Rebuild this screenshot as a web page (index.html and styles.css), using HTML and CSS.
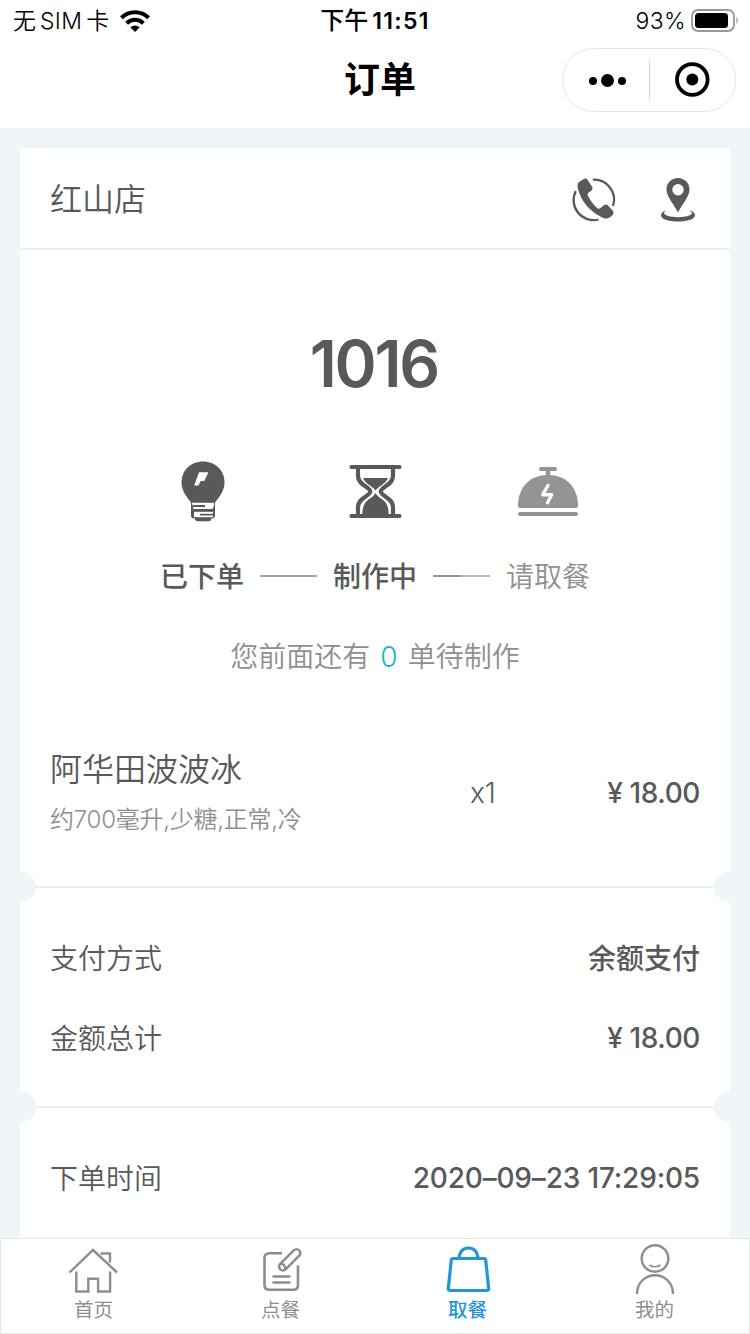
FILE: index.html
```html
<!DOCTYPE html>
<html lang="zh-CN">
<head>
<meta charset="utf-8">
<title>订单</title>
<link rel="stylesheet" href="styles.css">
</head>
<body>
<header class="top">
  <div class="status">
    <div class="carrier"><span>无</span><span class="sim">SIM</span><span>卡</span>
      <svg class="wifi" width="30" height="22" viewBox="0 0 30 22"><g fill="none" stroke="#000" stroke-width="4"><path d="M1.400 7.800a19.500 19.500 0 0 1 27.200 0"/><path d="M6.600 13.300a12 12 0 0 1 16.800 0"/></g><path d="M15 22l-4.700-4.700q4.700-3.800 9.400 0z"/></svg>
    </div>
    <div class="clock"><span>下午</span><span class="time">11:51</span></div>
    <div class="power"><span>93%</span>
      <svg width="48" height="24" viewBox="0 0 48 24"><rect x="1" y="1" width="42" height="21" rx="6" fill="none" stroke="#999" stroke-width="1.800"/><rect x="4" y="4" width="33" height="15" rx="3.500"/><path d="M45.500 8q2.500 3.500 0 7z" fill="#888"/></svg>
    </div>
  </div>
  <div class="nav">
    <h1 class="title">订单</h1>
    <div class="capsule">
      <svg class="half" width="86" height="62" viewBox="0 0 86 62"><circle cx="30" cy="32" r="4"/><circle cx="44.500" cy="31.500" r="6.500"/><circle cx="59" cy="32" r="4"/></svg>
      <i class="split"></i>
      <svg class="half" width="86" height="62" viewBox="0 0 86 62"><circle cx="43.300" cy="30.500" r="15.300" fill="none" stroke="#000" stroke-width="3.800"/><circle cx="43.300" cy="30.500" r="6"/></svg>
    </div>
  </div>
</header>

<main class="page">
  <section class="card">
    <div class="store">
      <span class="store-name cjk">红山店</span>
      <div class="store-actions">
        <svg width="44" height="46" viewBox="0 0 44 46"><g fill="none" stroke="#58595b" stroke-width="2.300"><path d="M20.800 3.700A20 20 0 0 1 41 30"/><path d="M3.800 15A20 20 0 0 0 26.500 43.500"/></g><path d="M6.300 6.600l5.400-3.500q2.500-1.300 4 .9l4.500 7q1.200 2.200-.8 3.700l-2.800 1.800q-1.700 1.200-.7 3.200 4.200 8 9.500 12.600 1.700 1.200 3.200-.2l3.700-3q2-1.400 3.700.3l5 5.700q1.300 1.800-.2 3.600-4.500 5.300-9.600 3.200Q11 32.500 5.800 12.500 5 8.500 6.300 6.600z" fill="#58595b"/></svg>
        <svg width="36" height="46" viewBox="0 0 36 46"><path fill="#58595b" fill-rule="evenodd" d="M18 2c-6.500 0-11.500 5-11.500 11.200C6.500 21 14 28 18 36.500 22 28 29.500 21 29.500 13.200 29.500 7 24.500 2 18 2zm0 6a5.700 5.700 0 1 1 0 11.400A5.700 5.700 0 0 1 18 8z"/><path fill="#58595b" d="M7 34C3 35 1 37 1 39.200 1 43 8 45.500 18 45.500s17-2.500 17-6.300C35 37 33 35 28.500 34c2.500 1.200 3.400 2.200 3.400 3 0 2.300-6 4.200-13.900 4.200S4.100 39.300 4.100 37c0-.8.700-1.900 2.900-3z"/></svg>
      </div>
    </div>

    <div class="number">1016</div>

    <div class="steps">
      <div class="step">
        <svg width="84" height="64" viewBox="0 0 84 64"><path fill="#58595b" d="M43 1.500c12.500 0 21.500 9 21.500 21 0 7.500-4 13-9.500 20H31c-5.500-7-9.500-12.500-9.500-20C21.500 10.500 30.500 1.500 43 1.500z"/><path fill="#fff" d="M39 12.300h9.500L44.300 21h-3.600l-2.200 4.500h-4.300z"/><path fill="#58595b" d="M31 42h24v14.500q-.5 2-3.500 2-.5 2.700-3 2.700h-11q-2 0-3-2.700-3 0-3.500-2z"/><path fill="#fff" d="M32 42.800h22q.5 4-1.500 6.200H33.500z"/><path fill="#fff" d="M34 51.800h19v5.400H34z"/><path d="M33 46h12M40 54.600h13" stroke="#58595b" stroke-width="1.800"/></svg>
        <b class="cjk">已下单</b>
      </div>
      <i class="link"></i>
      <div class="step">
        <svg width="84" height="64" viewBox="0 0 84 64"><g fill="none" stroke="#58595b" stroke-width="4.200"><path d="M18.500 7h48M18.500 56h48" stroke-linecap="round"/><path d="M25 8v8c0 9 11.500 10.500 12.300 15.500C36.500 36.500 25 38 25 47v8M60 8v8c0 9-11.500 10.500-12.300 15.500C48.500 36.500 60 38 60 47v8"/></g><path fill="#58595b" d="M30 18h25c-1.300 3-2.800 4.300-5.500 6.500-2.500 1.800-5 3.500-7 6-2-2.500-4.500-4.200-7-6-2.700-2.200-4.200-3.500-5.500-6.500zM42.500 33c2 3.500 4.500 5 7 6.500 4.500 3.500 6.200 7.500 6.200 16H29.300c0-8.500 1.700-12.500 6.200-16 2.500-1.500 5-3 7-6.500z"/></svg>
        <b class="cjk">制作中</b>
      </div>
      <i class="link fade"></i>
      <div class="step wait">
        <svg width="84" height="64" viewBox="0 0 84 64"><g stroke="#939495" stroke-linecap="round" fill="none"><path stroke-width="4" d="M35 9h14M14 54h56"/><path stroke-width="4.500" d="M42 10v8"/></g><path fill="#939495" d="M12 46C12 27 24 15 42 15s30 12 30 31q0 2-2 2H14q-2 0-2-2z"/><path d="M42 25.500l-5.300 9.200h9l-4.200 8" fill="none" stroke="#fff" stroke-width="3.400" stroke-linecap="round" stroke-linejoin="round"/></svg>
        <span class="cjk">请取餐</span>
      </div>
    </div>

    <p class="queue cjk">您前面还有<em>0</em>单待制作</p>

    <div class="item">
      <div class="item-text">
        <div class="item-name">阿华田波波冰</div>
        <div class="item-spec">约700毫升,少糖,正常,冷</div>
      </div>
      <span class="qty">x1</span>
      <span class="price"><span>¥</span>18.00</span>
    </div>

    <div class="tear"></div>
    <div class="rows">
      <div class="row"><span class="cjk">支付方式</span><b class="cjk">余额支付</b></div>
      <div class="row"><span class="cjk">金额总计</span><span class="price"><span>¥</span>18.00</span></div>
    </div>

    <div class="tear"></div>
    <div class="rows">
      <div class="row"><span class="cjk">下单时间</span><span class="stamp">2020–09–23 17:29:05</span></div>
    </div>
  </section>
</main>

<nav class="tabs">
  <div class="tab">
    <svg width="54" height="50" viewBox="0 0 54 50"><g fill="none" stroke="#8e8e8e" stroke-width="2.400"><path d="M2.500 26.500L26 4l24 22.500"/><path d="M33.500 7.500H43v9"/><path d="M9.300 25.500v20h12V32.700h9.800v12.800h12v-20"/></g></svg>
    <span>首页</span>
  </div>
  <div class="tab">
    <svg width="54" height="50" viewBox="0 0 54 50"><g fill="none" stroke="#8e8e8e" stroke-width="2.600"><path d="M28 7.300H15.500q-5 0-5 5v26.500q0 5 5 5h24q4.500 0 4.500-5V19.500"/><path d="M18.500 30.500h18M18.500 36.500h18" stroke-width="2.400"/><path d="M26.200 17.900L39.800 4.300a3.700 3.700 0 0 1 5.400 5.400L31.600 23.300a3.700 3.700 0 0 1-5.400-5.400z"/><path d="M26.200 17.500q4.500 0 5.200 5.500"/></g></svg>
    <span>点餐</span>
  </div>
  <div class="tab active">
    <svg width="54" height="50" viewBox="0 0 54 50"><g fill="none" stroke="#2196da" stroke-width="3.200" stroke-linejoin="round"><path d="M12 12.500h31q1.500 0 1.700 1.500l3 28.500q.1 2-1.900 2H9.200q-2 0-1.900-2l3-28.500q.2-1.500 1.700-1.500z"/><path d="M18 12.500q1-10.500 9.500-10.500T37 12.500"/></g></svg>
    <span>取餐</span>
  </div>
  <div class="tab">
    <svg width="54" height="50" viewBox="0 0 54 50"><g fill="none" stroke="#8e8e8e" stroke-width="2.400"><circle cx="27" cy="12.500" r="13.300"/><path d="M9 48C9 37 17 29.300 27 29.300S45 37 45 48"/><path d="M21.500 19q5.500 3.500 11 0" stroke-width="1.500"/></g></svg>
    <span>我的</span>
  </div>
</nav>
</body>
</html>
```
FILE: styles.css
```css
* { box-sizing: border-box; }
body {
  margin: 0;
  width: 750px;
  height: 1334px;
  display: flex;
  flex-direction: column;
  overflow: hidden;
  background: #eff5f9;
  color: #58595b;
  font: 350 28px/40px Inter, "Noto Sans CJK SC", sans-serif;
}
svg { display: block; flex: none; overflow: visible; }
b { font-weight: 500; }
.cjk { padding-top: 2px; }

.top { flex: none; height: 128px; background: #fff; color: #000; }
.status {
  height: 40px;
  display: grid;
  grid-template-columns: 1fr auto 1fr;
  padding: 1px 11px 0 13px;
  font-size: 23px;
}
.carrier, .clock, .power { display: flex; align-items: center; }
.carrier { gap: 4px; }
.sim { letter-spacing: .3px; }
.wifi { margin-left: 7px; }
.clock { gap: 4px; margin-left: -2px; font-size: 24px; font-weight: 500; }
.time { font-size: 23px; font-weight: 600; letter-spacing: 1.3px; }
.power { justify-content: flex-end; gap: 5px; letter-spacing: .4px; }
.nav {
  height: 88px;
  display: grid;
  grid-template-columns: 1fr auto 1fr;
  align-items: start;
  padding: 0 14px 0 24px;
}
.title { grid-column: 2; margin: 15px 0 0; font-size: 36px; line-height: 50px; font-weight: 700; }
.capsule {
  justify-self: end;
  margin-top: 8px;
  width: 174px;
  height: 64px;
  display: flex;
  align-items: center;
  border: 1px solid #e6e6e6;
  border-radius: 32px;
}
.split { width: 1px; height: 38px; margin-right: -1px; background: #d0d0d0; }

.page { flex: 1; min-height: 0; overflow: hidden; padding: 20px 20px 0; }
.card { background: #fff; height: 1100px; }
.store {
  height: 102px;
  display: flex;
  align-items: center;
  justify-content: space-between;
  padding: 0 34px 0 30px;
  border-bottom: 2px solid #efefef;
  font-size: 32px;
}
.store-name { padding-top: 4px; }
.store-actions { display: flex; gap: 44px; margin-top: 2px; }
.number {
  padding-top: 74px;
  line-height: 80px;
  font-size: 64px;
  font-weight: 570;
  letter-spacing: -2.3px;
  text-indent: -2.3px;
  text-align: center;
}
.steps { display: flex; justify-content: center; align-items: flex-end; padding-top: 56px; }
.step { width: 84px; display: flex; flex-direction: column; gap: 31px; white-space: nowrap; }
.wait { color: #8e8f90; }
.link { width: 57px; height: 2px; margin: 0 16px 20px; background: #a4a4a5; }
.fade { background: linear-gradient(90deg, #969697 50%, #bbb 50%); }
.queue { margin: 38px 0 0; text-align: center; color: #8e8f90; }
.queue em { margin: 0 10px; font-style: normal; color: #1fb0d0; }
.item { height: 209px; display: flex; align-items: center; padding: 22px 30px 0; }
.item-text { width: 420px; padding-top: 3px; }
.item-name { font-size: 32px; line-height: 48px; }
.item-spec { margin-top: 4px; font-size: 24px; line-height: 44px; letter-spacing: -.25px; color: #8e8f90; }
.qty { flex: 1; }
.price { display: flex; gap: 7px; font-weight: 500; letter-spacing: -.4px; }
.tear {
  position: relative;
  height: 2px;
  background: #efefef;
}
.tear::before, .tear::after {
  content: "";
  position: absolute;
  top: -14px;
  width: 30px;
  height: 30px;
  border-radius: 50%;
  background: #eff5f9;
}
.tear::before { left: -14px; }
.tear::after { right: -14px; }
.rows { padding: 30px 30px 28px; }
.row { height: 80px; display: flex; align-items: center; justify-content: space-between; }
.stamp { font-weight: 500; letter-spacing: -.17px; }

.tabs {
  flex: none;
  height: 96px;
  display: grid;
  grid-template-columns: repeat(4, 187px);
  background: #fff;
  border: 1px solid #e4e7e9;
}
.tab {
  display: flex;
  flex-direction: column;
  align-items: center;
  padding: 7px 2px 0 0;
  font-size: 19.5px;
  font-weight: 400;
  line-height: 28px;
  color: #8e8e8e;
}
.active { color: #2196da; font-weight: 500; }
```
